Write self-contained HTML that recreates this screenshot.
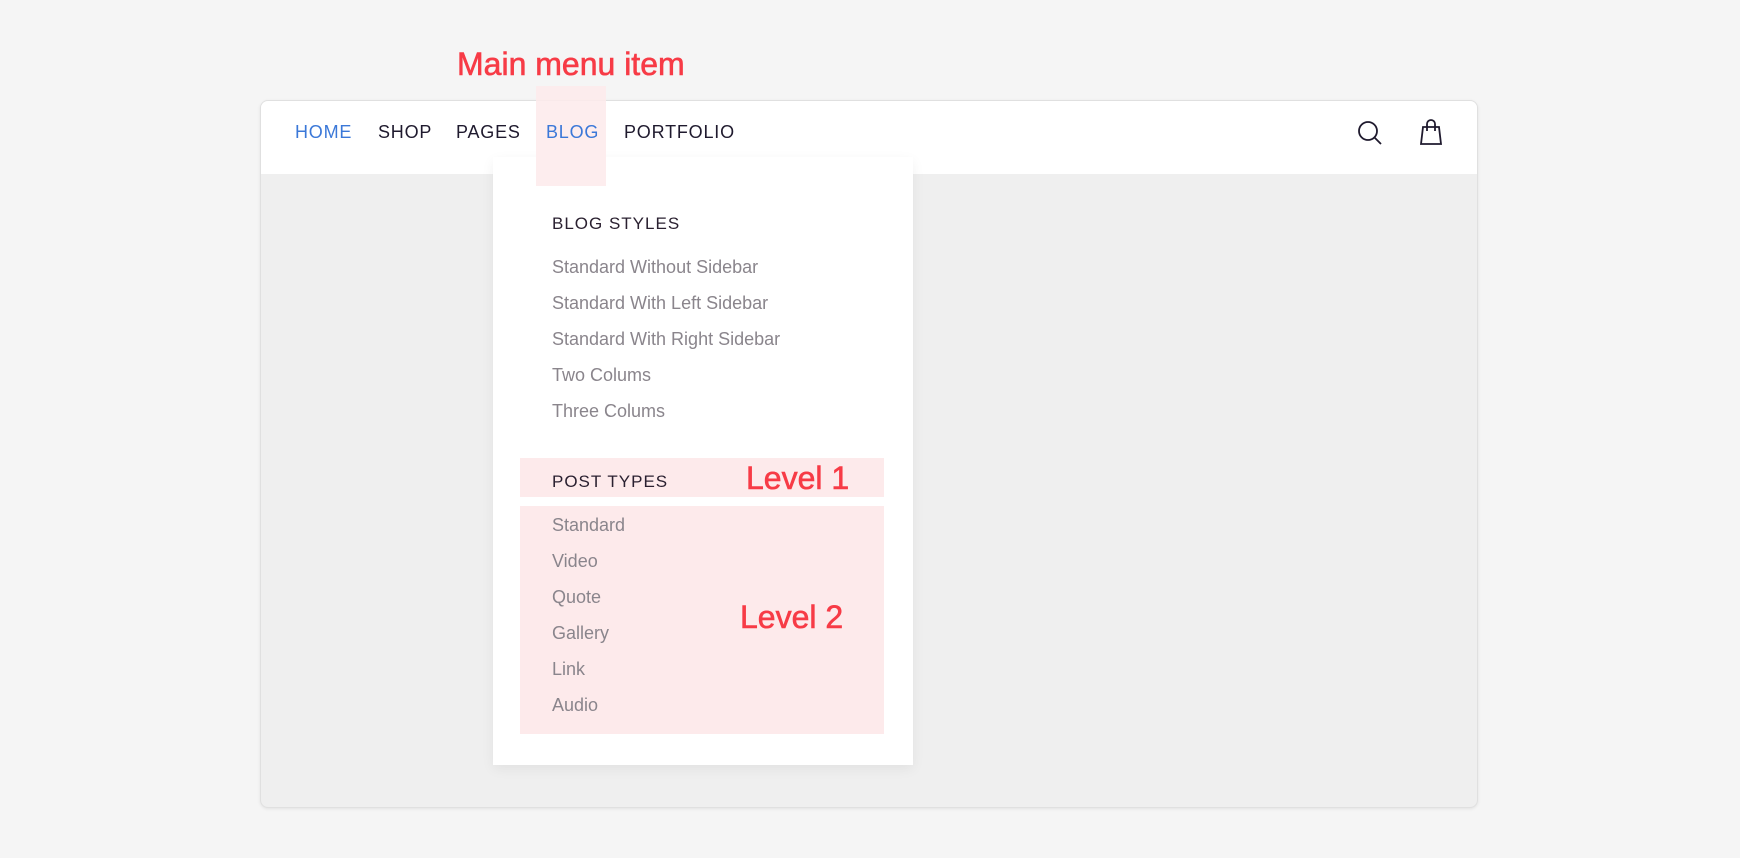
<!DOCTYPE html>
<html><head><meta charset="utf-8"><style>
*{margin:0;padding:0;box-sizing:border-box}
body{width:1740px;height:858px;background:#f5f5f5;position:relative;overflow:hidden;font-family:"Liberation Sans",sans-serif}
.a{position:absolute;white-space:nowrap}
.card{left:260px;top:100px;width:1218px;height:708px;background:#efefef;border:1px solid #e0e0e0;border-radius:8px;overflow:hidden;box-shadow:0 1px 3px rgba(0,0,0,.08)}
.nav{left:0;top:0;width:100%;height:73px;background:#fff}
.nv{font-size:18px;letter-spacing:.8px;color:#1f1a2e;top:122px}
.drop{left:493px;top:157px;width:420px;height:608px;background:#fff;box-shadow:0 4px 12px rgba(0,0,0,.06)}
.pk{background:#fdeaeb}
.h{font-size:17px;letter-spacing:1px;color:#2a2030;left:552px}
.it{font-size:18px;color:#8a858c;left:552px}
.red{color:#f73b46}
</style></head><body>
<div class="a card"><div class="a nav"></div></div>
<div class="a drop"></div>
<div class="a pk" style="left:536px;top:86px;width:70px;height:100px;opacity:.85"></div>
<div class="a pk" style="left:520px;top:458px;width:364px;height:39px"></div>
<div class="a pk" style="left:520px;top:506px;width:364px;height:228px"></div>
<div class="a red" style="left:457px;top:46px;font-size:32px;-webkit-text-stroke:.6px #f73b46">Main menu item</div>
<div class="a nv" style="left:295px;color:#3b78d8">HOME</div>
<div class="a nv" style="left:378px">SHOP</div>
<div class="a nv" style="left:456px">PAGES</div>
<div class="a nv" style="left:546px;color:#3b78d8">BLOG</div>
<div class="a nv" style="left:624px">PORTFOLIO</div>
<svg class="a" style="left:1356px;top:119px" width="28" height="28" viewBox="0 0 28 28"><circle cx="12" cy="12" r="9" fill="none" stroke="#1f1a2e" stroke-width="1.8"/><path d="M18.5 18.5L25 25" stroke="#1f1a2e" stroke-width="1.8"/></svg>
<svg class="a" style="left:1418px;top:118px" width="26" height="28" viewBox="0 0 26 28"><path d="M5 9H21L23 26H3Z" fill="none" stroke="#1f1a2e" stroke-width="1.8"/><path d="M9 13V6a4 4 0 0 1 8 0v7" fill="none" stroke="#1f1a2e" stroke-width="1.8"/></svg>
<div class="a h" style="top:214px">BLOG STYLES</div>
<div class="a it" style="top:257px">Standard Without Sidebar</div>
<div class="a it" style="top:293px">Standard With Left Sidebar</div>
<div class="a it" style="top:329px">Standard With Right Sidebar</div>
<div class="a it" style="top:365px">Two Colums</div>
<div class="a it" style="top:401px">Three Colums</div>
<div class="a h" style="top:472px">POST TYPES</div>
<div class="a red" style="left:746px;top:460px;font-size:32px;-webkit-text-stroke:.6px #f73b46">Level 1</div>
<div class="a it" style="top:515px">Standard</div>
<div class="a it" style="top:551px">Video</div>
<div class="a it" style="top:587px">Quote</div>
<div class="a it" style="top:623px">Gallery</div>
<div class="a it" style="top:659px">Link</div>
<div class="a it" style="top:695px">Audio</div>
<div class="a red" style="left:740px;top:599px;font-size:32px;-webkit-text-stroke:.6px #f73b46">Level 2</div>
</body></html>
